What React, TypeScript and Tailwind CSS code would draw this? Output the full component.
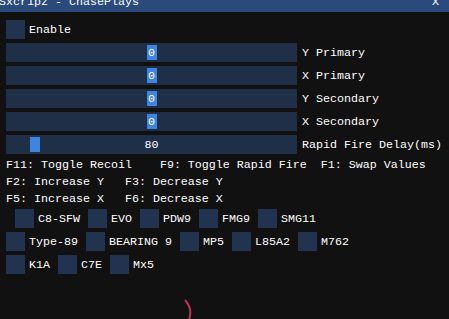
import React from "react";

const font = { fontFamily: '"Liberation Mono", "DejaVu Sans Mono", monospace' };

function Slider({ value, t, label }: { value: string; t: number; label: string }) {
  const left = 2 + (291 - 4 - 10) * t;
  return (
    <div className="flex items-center h-[19px]">
      <div className="relative w-[291px] h-[19px] bg-[#1f2f48] flex items-center justify-center">
        <div className="absolute top-[2px] w-[10px] h-[15px] bg-[#3d85e0]" style={{ left }} />
        <span className="relative top-[1px] text-white leading-[13px]">{value}</span>
      </div>
      <span className="relative top-[1px] ml-[5px] text-white leading-[13px] whitespace-pre">{label}</span>
    </div>
  );
}

function Check({ label }: { label: string }) {
  return (
    <div className="flex items-center h-[19px]">
      <div className="w-[19px] h-[19px] bg-[#22334f]" />
      <span className="relative top-[1px] ml-[4px] text-white leading-[13px] whitespace-pre">{label}</span>
    </div>
  );
}

export default function App() {
  return (
    <div
      className="relative w-[449px] h-[319px] bg-[#111111] overflow-hidden text-[11.67px] text-white"
      style={font}
    >
      <div className="relative h-[12px] bg-[#294a7a] overflow-hidden">
        <span className="absolute left-[-1px] top-[-4px] leading-[13px] whitespace-pre">Sxcr1pz - ChasePlays</span>
        <span className="absolute left-[432px] top-[-4px] leading-[13px]">X</span>
      </div>
      <div className="flex flex-col gap-[4px] pl-[6px] pt-[8px]">
        <Check label="Enable" />
        <Slider value="0" t={0.5} label="Y Primary" />
        <Slider value="0" t={0.5} label="X Primary" />
        <Slider value="0" t={0.5} label="Y Secondary" />
        <Slider value="0" t={0.5} label="X Secondary" />
        <Slider value="80" t={0.08} label="Rapid Fire Delay(ms)" />
        <div className="relative top-[1px] h-[13px] leading-[13px] whitespace-pre">F11: Toggle Recoil    F9: Toggle Rapid Fire  F1: Swap Values</div>
        <div className="relative top-[1px] h-[13px] leading-[13px] whitespace-pre">F2: Increase Y   F3: Decrease Y</div>
        <div className="relative top-[1px] h-[13px] leading-[13px] whitespace-pre">F5: Increase X   F6: Decrease X</div>
        <div className="flex gap-[8px] pl-[9px]">
          <Check label="C8-SFW" />
          <Check label="EVO" />
          <Check label="PDW9" />
          <Check label="FMG9" />
          <Check label="SMG11" />
        </div>
        <div className="flex gap-[8px]">
          <Check label="Type-89" />
          <Check label="BEARING 9" />
          <Check label="MP5" />
          <Check label="L85A2" />
          <Check label="M762" />
        </div>
        <div className="flex gap-[8px]">
          <Check label="K1A" />
          <Check label="C7E" />
          <Check label="Mx5" />
        </div>
      </div>
      <svg className="absolute left-0 top-0" width="449" height="319">
        <path d="M185 300 Q193 309 189 319" stroke="#c2305a" strokeWidth="2" fill="none" />
      </svg>
    </div>
  );
}
